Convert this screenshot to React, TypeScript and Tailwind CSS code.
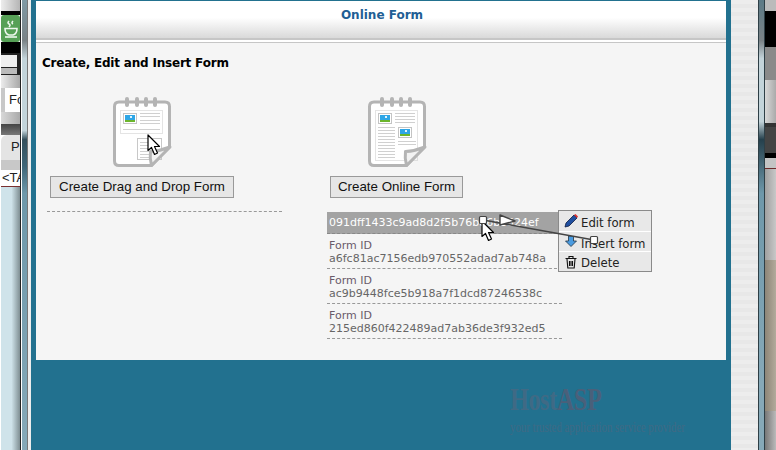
import type { ReactNode } from 'react'

const formIds = [
  'a6fc81ac7156edb970552adad7ab748a',
  'ac9b9448fce5b918a7f1dcd87246538c',
  '215ed860f422489ad7ab36de3f932ed5',
]

function Cursor() {
  return (
    <svg width="14" height="22" viewBox="0 0 14 22" className="block">
      <path d="M1 1 L1 16.5 L4.5 13.5 L7.5 20.5 L10.5 19 L7.5 12.5 L12.5 12.5 Z" fill="#fff" stroke="#000" strokeWidth="1.2" strokeLinejoin="round" />
    </svg>
  )
}

function Photo({ x, y }: { x: number; y: number }) {
  return (
    <g>
      <rect x={x + 0.5} y={y + 0.5} width="13" height="10" fill="#fff" stroke="#c4c4c4" />
      <rect x={x + 2} y={y + 2} width="10" height="7" fill="#2ea6e6" />
      <rect x={x + 2} y={y + 7} width="10" height="2" fill="#6cb52d" />
      <rect x={x + 7} y={y + 3} width="2" height="2" fill="#dff3ff" />
    </g>
  )
}

function Lines({ x, w, ys }: { x: number; w: number; ys: number[] }) {
  return (
    <g stroke="#d0d0d0" strokeWidth="1">
      {ys.map(y => (
        <line key={y} x1={x} x2={x + w} y1={y + 0.5} y2={y + 0.5} />
      ))}
    </g>
  )
}

function Notepad({ children, dotted }: { children: ReactNode; dotted: number }) {
  return (
    <svg width="60" height="71" viewBox="0 0 60 71" className="block">
      <path d="M6 5 H52 Q56.5 5 56.5 9.5 V50 L38.5 68.5 H6 Q1.5 68.5 1.5 64 V9.5 Q1.5 5 6 5 Z" fill="#fff" stroke="#b4b4b4" strokeWidth="3" />
      <g fill="#b4b4b4">
        <rect x="12" y="0" width="4" height="10" rx="2" />
        <rect x="22" y="0" width="4" height="10" rx="2" />
        <rect x="31" y="0" width="4" height="10" rx="2" />
        <rect x="40" y="0" width="4" height="10" rx="2" />
      </g>
      <rect x="7.5" y="13.5" width="42" height={dotted} fill="none" stroke="#c8c8c8" strokeDasharray="1 1" />
      {children}
      <path d="M57 50 L38.5 68.5 Q36.5 61 37.5 54.5 Q47 54 57 50 Z" fill="#f2f2f2" stroke="#b4b4b4" strokeWidth="3" strokeLinejoin="round" />
    </svg>
  )
}

function Band({ className }: { className: string }) {
  return <div className={className} />
}

export default function App() {
  return (
    <div className="relative w-[776px] h-[450px] overflow-hidden flex bg-white font-['DejaVu_Sans',sans-serif]">
      {/* Left window behind */}
      <div className="w-[19px] ml-px flex flex-col text-[13px] font-['Liberation_Sans',sans-serif] overflow-hidden">
        <Band className="h-[11px] bg-[linear-gradient(to_right,#ededed,#b5b5b5)]" />
        <Band className="h-[4px] bg-black" />
        <div className="h-[27px] bg-[#56a056] rounded-[3px] flex items-center justify-center">
          <svg width="16" height="18" viewBox="0 0 16 18" fill="none" stroke="#eef7ee" strokeWidth="1.6">
            <path d="M6 1 Q4 3 6 4 Q8 5 6 7 M10 1 Q8 3 10 4" />
            <path d="M2 8.5 H14 Q14 14 10 15 H6 Q2 14 2 8.5 Z" />
            <path d="M2 17 H14" />
          </svg>
        </div>
        <Band className="h-[11px] bg-black" />
        <div className="h-[22px] bg-[#222] flex flex-col gap-px pt-[2px]">
          <div className="w-[16px] h-[12px] bg-[#f0f0f0]" />
          <div className="w-[16px] h-[6px] bg-[#bbb]" />
        </div>
        <Band className="h-[13px] bg-[linear-gradient(to_right,#ececec,#a8a8a8)]" />
        <div className="h-[24px] bg-white border-l-[4px] border-[#c8c8c8] pl-[4px] leading-[24px] text-[#222] whitespace-nowrap">Fo</div>
        <Band className="h-[12px] bg-[linear-gradient(to_right,#d8d8d8,#aaa)]" />
        <Band className="h-[11px] bg-[linear-gradient(to_bottom,#444,#777)]" />
        <div className="h-[25px] bg-[#e4e4e4] rounded-tl-[6px] pl-[10px] leading-[24px] text-[#222] whitespace-nowrap">Pa</div>
        <Band className="h-[10px] bg-[#c8c8c8]" />
        <div className="h-[17px] bg-white border-b border-[#7a3030] leading-[16px] pl-px text-[#222] whitespace-nowrap">&lt;TA</div>
        <Band className="flex-1 bg-[linear-gradient(to_right,#cfe3ea_55%,#7f8f93)]" />
      </div>
      <div className="w-[1px] bg-[#222]" />
      <div className="w-[5px] ml-px bg-[linear-gradient(to_bottom,#7f9aa5,#7a8286_9%,#c3d4da_13%,#c3d4da_29%,#35505c_31%,#3f6678_37%,#6e98aa_43%,#86a9b8)]" />
      <div className="w-px bg-[#777]" />
      <div className="w-[3px] bg-[#ececec]" />

      {/* Page */}
      <div className="w-[700px] shrink-0 bg-[#22718f] flex flex-col pt-px">
        <div className="flex flex-col h-[359px] mx-[5px] bg-[#f5f5f5]">
          <div className="h-[37px] shrink-0 pl-[2px] bg-[linear-gradient(to_bottom,#fff_45%,#d9d9d9)] text-center text-[12px] font-bold text-[#1f5f95] leading-[28px]">
            Online Form
          </div>
          <div className="h-[5px] shrink-0 bg-white border-t-[2px] border-b border-[#c6c6c6]" />
          <div className="pl-[6px] pt-[12px] text-[12px] font-bold tracking-[-0.2px] text-black leading-[16px]">
            Create, Edit and Insert Form
          </div>
          <div className="flex">
            {/* Drag and drop column */}
            <div className="w-[246px] ml-[11px] flex flex-col">
              <div className="pl-[66px] pt-[26px]">
                <Notepad dotted={23}>
                  <Photo x={10} y={16} />
                  <Lines x={27} w={20} ys={[16, 19, 23, 26]} />
                  <Lines x={10} w={37} ys={[32]} />
                  <rect x="24.5" y="41.5" width="24" height="21" fill="#fff" stroke="#c8c8c8" />
                  <Lines x={27} w={9} ys={[45, 48, 51, 54, 57, 60]} />
                </Notepad>
              </div>
              <button className="self-start ml-[3px] mt-[8px] h-[22px] w-[184px] bg-[#e6e6e6] border border-[#999] text-[13.33px] text-[#111] font-['Liberation_Sans',sans-serif] leading-[20px]">
                Create Drag and Drop Form
              </button>
              <div className="mt-[13px] w-[235px] border-b border-dashed border-[#999]" />
            </div>

            {/* Online form column */}
            <div className="w-[300px] ml-[37px] flex flex-col">
              <div className="pl-[38px] pt-[26px]">
                <Notepad dotted={50}>
                  <Photo x={10} y={16} />
                  <Photo x={30} y={30} />
                  <Lines x={27} w={20} ys={[16, 19, 22, 25]} />
                  <Lines x={10} w={17} ys={[30, 33, 36, 39, 42, 45, 48, 51, 54, 57, 60]} />
                  <Lines x={30} w={18} ys={[44, 47]} />
                </Notepad>
              </div>
              <button className="self-start mt-[8px] w-[133px] h-[22px] bg-[#e6e6e6] border border-[#999] text-[13.33px] text-[#111] font-['Liberation_Sans',sans-serif] leading-[20px]">
                Create Online Form
              </button>
              <div className="mt-[14px] -ml-[3px] w-[235px] flex flex-col text-[11px] leading-[13px] text-[#666]">
                <div className="h-[22px] bg-[#a3a3a3] text-white pl-[2px] leading-[22px] border-b border-dashed border-[#888] whitespace-nowrap">
                  091dff1433c9ad8d2f5b76b86b3524ef
                </div>
                {formIds.map(id => (
                  <div key={id} className="h-[35px] pt-[5px] pl-[2px] border-b border-dashed border-[#999]">
                    <div className="text-[#6a5a6a]">Form ID</div>
                    <div>{id}</div>
                  </div>
                ))}
              </div>
            </div>
          </div>
        </div>

        {/* Footer logo */}
        <div className="pl-[479px] pt-[25px] font-['Liberation_Serif',serif] font-bold">
          <div className="text-[31px] leading-[30px] tracking-[-0.5px] scale-x-[0.78] origin-left whitespace-nowrap">
            <span className="text-[#3f6a85]">Host</span><span className="text-[#4a607a]">ASP</span>
          </div>
          <div className="mt-[5px] text-[14px] leading-[16px] font-normal text-[#3f6a85] scale-x-[0.77] origin-left whitespace-nowrap">
            your trusted application service provider
          </div>
        </div>
      </div>

      {/* Right strips */}
      <div className="w-[27px] shrink-0 bg-[repeating-linear-gradient(to_bottom,#ededed_0,#ededed_4px,#e8e8e8_4px,#e8e8e8_8px)]" />
      <div className="w-[1px] bg-[#2e3f46]" />
      <div className="w-[5px] bg-[linear-gradient(to_bottom,#5b7a86,#7a8286_9%,#c3d4da_13%,#c3d4da_27%,#25404c_31%,#6e98aa_43%,#86a9b8_85%,#86a9b8)]" />
      <div className="w-[1px] bg-[#2e3f46]" />
      <div className="flex-1 flex flex-col">
        <Band className="h-[11px] bg-[#bbb]" />
        <Band className="h-[36px] bg-black" />
        <Band className="h-[33px] bg-[#8a8a8a]" />
        <Band className="h-[43px] bg-[linear-gradient(to_right,#d8d8d8,#aaa)]" />
        <Band className="h-[4px] bg-[#333]" />
        <Band className="h-[26px] bg-[#444]" />
        <Band className="h-[5px] bg-black" />
        <Band className="h-[10px] bg-[#c4c4c4]" />
        <Band className="h-px bg-[#6e2a2a]" />
        <Band className="h-[91px] bg-[linear-gradient(to_right,#a0a0a0,#c8c8c8)]" />
        <Band className="h-[151px] bg-[linear-gradient(to_right,#8d8577,#b3ab9c)]" />
        <Band className="flex-1 bg-[linear-gradient(to_right,#777,#bbb)]" />
      </div>

      {/* Context menu */}
      <div className="absolute left-[558px] top-[210px] w-[94px] h-[62px] bg-[#e8e8e8] border border-[#8a8a8a] flex flex-col text-[11.7px] text-[#222]">
        <div className="h-[21px] shrink-0 flex items-center gap-[3px] pl-[5px] border-b border-white">
          <svg width="14" height="14" viewBox="0 0 14 14">
            <path d="M2 9 L10 1 L13 4 L5 12 L1 13 Z" fill="#1f4fa0" stroke="#0c1c40" strokeWidth="0.8" />
            <path d="M10 1 L11.5 0 L14 2.5 L13 4 Z" fill="#d33" />
          </svg>
          <span className="pt-[6px]">Edit form</span>
        </div>
        <div className="h-[20px] shrink-0 flex items-center gap-[3px] pl-[5px] border-b border-white">
          <svg width="14" height="11" viewBox="0 0 14 11">
            <path d="M4.5 0 H9.5 V5 H12.5 L7 10.5 L1.5 5 H4.5 Z" fill="#4a9be0" stroke="#234" strokeWidth="0.8" />
          </svg>
          <span className="pt-[6px]">Insert form</span>
        </div>
        <div className="flex-1 flex items-center gap-[3px] pl-[5px]">
          <svg width="14" height="14" viewBox="0 0 14 14" fill="none" stroke="#111" strokeWidth="1.1">
            <path d="M1.5 3.5 H12.5 M5 3 V1.5 H9 V3 M3 4 L3.8 13 H10.2 L11 4 M5.5 6 V11 M7 6 V11 M8.5 6 V11" />
          </svg>
          <span className="pt-[3px]">Delete</span>
        </div>
      </div>

      {/* Tutorial pointer annotation */}
      <div className="absolute left-[481px] top-[220px]"><Cursor /></div>
      <svg className="absolute left-[475px] top-[212px]" width="130" height="36" viewBox="0 0 130 36">
        <line x1="8" y1="8" x2="119" y2="28" stroke="#444" strokeWidth="1.6" />
        <path d="M25 3 L40 9 L25 13 Z" fill="#fff" stroke="#444" strokeWidth="1.4" strokeLinejoin="round" />
        <rect x="4.5" y="4.5" width="7" height="7" rx="1" fill="#fff" stroke="#444" strokeWidth="1.2" />
        <rect x="115.5" y="24.5" width="7" height="7" rx="1" fill="#fff" stroke="#444" strokeWidth="1.2" />
      </svg>
      <div className="absolute left-[147px] top-[134px]"><Cursor /></div>
    </div>
  )
}
